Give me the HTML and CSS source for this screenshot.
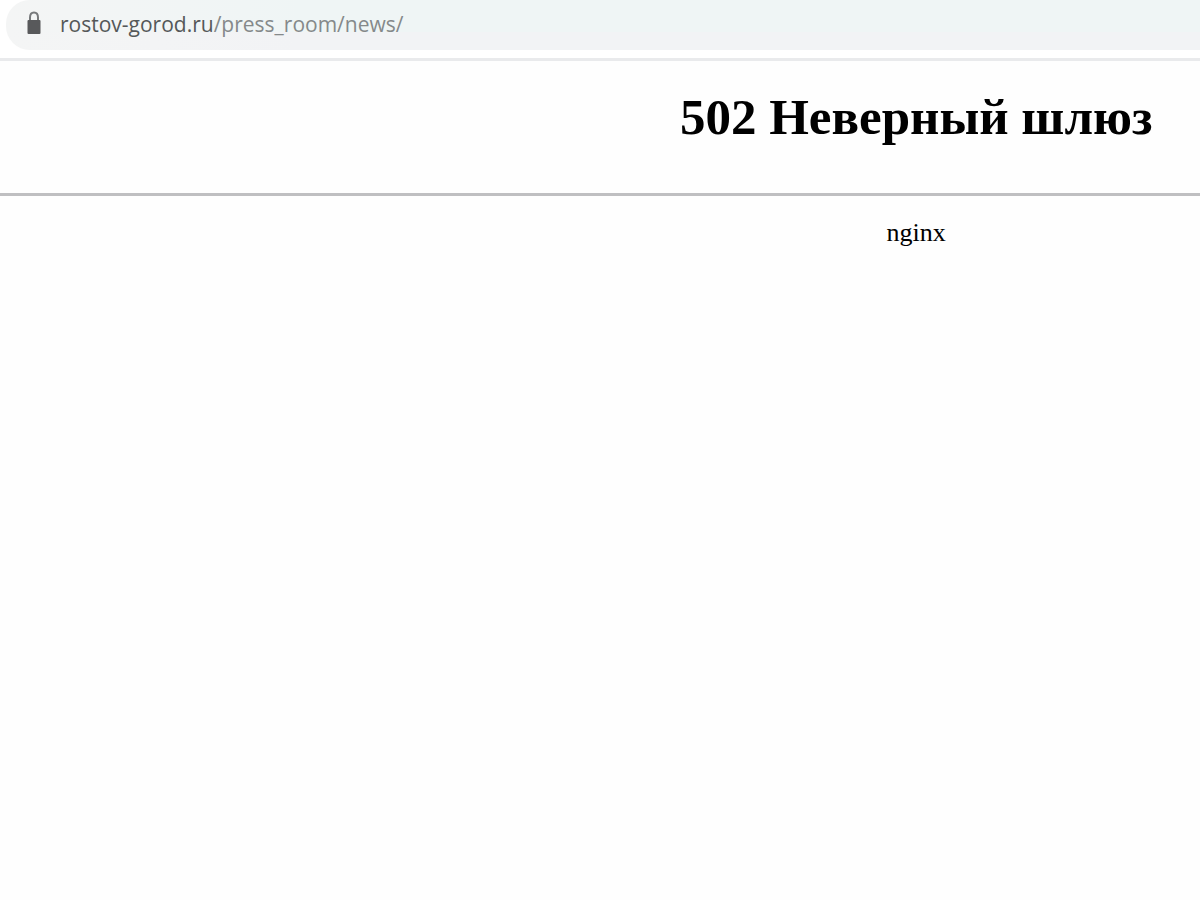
FILE: index.html
```html
<!DOCTYPE html>
<html lang="ru">
<head>
  <meta charset="UTF-8">
  <meta name="viewport" content="width=device-width, initial-scale=1.0">
  <title>502 Неверный шлюз</title>
  <link rel="stylesheet" href="styles.css">
</head>
<body>
  <header class="toolbar">
    <div class="address-bar">
      <svg class="lock" viewBox="0 0 14 24" aria-hidden="true">
        <path d="M3 10V6.500C3 3 4.500 1.500 7 1.500S11 3 11 6.500V10" fill="none" stroke="#77797b" stroke-width="2"/>
        <rect x="0.500" y="9" width="13" height="14" rx="1" fill="#58595b"/>
      </svg>
      <a class="url" href="#"><span class="host">rostov-gorod.ru</span>/press_room/news/</a>
    </div>
  </header>

  <main>
    <h1>502 Неверный шлюз</h1>
    <hr>
    <p class="server">nginx</p>
  </main>
</body>
</html>
```
FILE: styles.css
```css
body {
  margin: 0;
  background-color: #fefefe;
  color: #000;
  font-family: "Liberation Serif", "Times New Roman", serif;
}

.toolbar {
  padding: 0 0 8px 6px;
  background-color: #fff;
  border-bottom: 3px solid #e9eaec;
}

.address-bar {
  display: flex;
  align-items: center;
  box-sizing: border-box;
  height: 50px;
  padding: 0 0 2px 21px;
  border-radius: 24px 0 0 24px;
  background: linear-gradient(to right, #f4f5f5, transparent 25%),
    linear-gradient(#eff5f5 32px, #f2f3f5 32px);
}

.lock {
  width: 14px;
  height: 24px;
  margin: 0 19px 2px 0;
}

.url {
  color: #85898a;
  font-family: "Open Sans", sans-serif;
  font-size: 21px;
  text-decoration: none;
}

.host {
  color: #555859;
}

/* title and server name share one centre, right of the middle */
h1,
.server {
  margin: 0;
  padding-left: 52.7%;
  text-align: center;
  white-space: nowrap;
}

h1 {
  padding-top: 25px;
  padding-bottom: 45px;
  font-size: 51px;
  line-height: 62px;
}

hr {
  height: 3px;
  margin: 0 0 22px;
  border: none;
  background-color: #bfbfc1;
}

.server {
  font-size: 26px;
  line-height: 30px;
}
```
